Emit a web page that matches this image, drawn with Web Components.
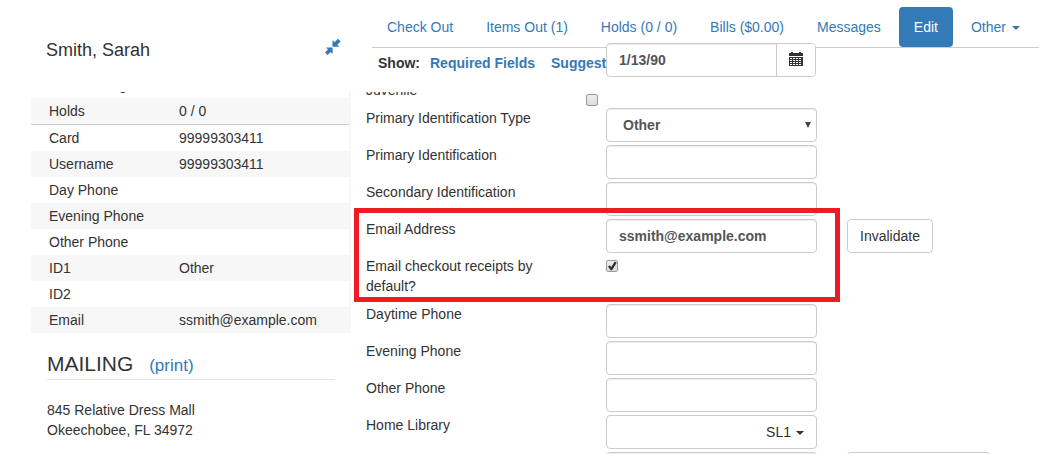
<!DOCTYPE html>
<html lang="en">
<head>
<meta charset="utf-8">
<title>Patron Editor</title>
<style>
    html, body {
        height: 100%;
    }

    body {
        margin: 0;
        overflow: hidden;
        background: #fff;
        color: #333;
        font: 14px/20px "Liberation Sans", Arial, sans-serif;
    }
</style>
</head>
<body>
<patron-page>
    <patron-summary slot="side" name="Smith, Sarah"></patron-summary>
    <nav-tabs slot="tabs">
        <nav-tab>Check Out</nav-tab>
        <nav-tab>Items Out (1)</nav-tab>
        <nav-tab>Holds (0 / 0)</nav-tab>
        <nav-tab>Bills ($0.00)</nav-tab>
        <nav-tab>Messages</nav-tab>
        <nav-tab active>Edit</nav-tab>
        <nav-tab dropdown>Other</nav-tab>
    </nav-tabs>
    <field-filter slot="filter"></field-filter>
    <date-field slot="date" value="1/13/90"></date-field>

    <form-row type="checkbox" label="Juvenile" outdent></form-row>
    <form-row type="select" label="Primary Identification Type" value="Other"></form-row>
    <form-row label="Primary Identification"></form-row>
    <form-row label="Secondary Identification"></form-row>
    <highlight-box>
        <form-row label="Email Address" value="ssmith@example.com">
            <action-button>Invalidate</action-button>
        </form-row>
        <form-row type="checkbox" label="Email checkout receipts by default?" checked></form-row>
    </highlight-box>
    <form-row label="Daytime Phone"></form-row>
    <form-row label="Evening Phone"></form-row>
    <form-row label="Other Phone"></form-row>
    <form-row type="dropdown" label="Home Library" value="SL1"></form-row>
    <form-row label="Main (Profile) Permission Group">
        <action-button>Secondary Groups</action-button>
    </form-row>
</patron-page>

<template id="patron-page">
    <style>
        :host {
            display: flex;
            height: 100%;
        }

        aside {
            flex: none;
            width: 351px;
        }

        main {
            flex: 1;
            min-width: 0;
            display: flex;
            flex-direction: column;
        }

        header {
            position: relative;
            flex: none;
            box-sizing: border-box;
            height: 92px;
            padding: 7px 0 0 21px;
        }

        slot[name="date"]::slotted(*) {
            position: absolute;
            top: 43px;
            left: 255px;
        }

        .fields {
            flex: 1;
            overflow: hidden;
        }

        /* form is scrolled partly under the header */
        form {
            margin-top: -12px;
        }
    </style>

    <aside><slot name="side"></slot></aside>
    <main>
        <header>
            <slot name="tabs"></slot>
            <slot name="filter"></slot>
            <slot name="date"></slot>
        </header>
        <div class="fields">
            <form><slot></slot></form>
        </div>
    </main>
</template>

<template id="patron-summary">
    <style>
        :host {
            display: flex;
            flex-direction: column;
            height: 100%;
        }

        header {
            flex: none;
            box-sizing: border-box;
            height: 92px;
            padding: 38px 10px 0 46px;
            display: flex;
            justify-content: space-between;
            align-items: flex-start;
        }

        h4 {
            margin: 0;
            font-size: 18px;
            line-height: 24px;
            font-weight: normal;
        }

        a {
            color: #337ab7;
            text-decoration: none;
        }

        svg {
            display: block;
        }

        .scroll {
            flex: 1;
            overflow: hidden;
            padding-left: 31px;
        }

        table {
            width: 100%;
            margin-top: -20px;
            border-collapse: collapse;
            border-right: 2px solid #f7f7f7;
        }

        th, td {
            padding: 3px 0;
            height: 20px;
            text-align: left;
            font-weight: normal;
        }

        th {
            width: 130px;
            padding-left: 18px;
        }

        tr:nth-child(even) {
            background: #f7f7f7;
        }

        tr.divider {
            border-bottom: 1px solid #ccc;
        }

        section {
            padding: 16px 16px 0;
        }

        h3 {
            margin: 0 0 20px;
            border-bottom: 1px solid #e5e5e5;
            font-size: 21px;
            line-height: 30px;
            font-weight: normal;
        }

        h3 a {
            margin-left: 10px;
            font-size: 17px;
            line-height: 20px;
        }

        address {
            font-style: normal;
        }
    </style>

    <header>
        <h4></h4>
        <a href="#" aria-label="Collapse summary">
            <svg width="16" height="18" viewBox="0 0 16 18" fill="#337ab7">
                <path d="M7.5 2.2 9.6 4.2 13 .8 15.7 3.4 12.3 6.8 14.3 8.8H7.5zM7.6 9.4V16L5.6 14 2.6 17 0 14.5 3 11.4 1 9.4z"/>
            </svg>
        </a>
    </header>
    <div class="scroll">
        <table></table>
        <section>
            <h3>MAILING <a href="#">(print)</a></h3>
            <address>845 Relative Dress Mall<br>Okeechobee, FL 34972</address>
        </section>
    </div>
</template>

<template id="nav-tabs">
    <style>
        :host {
            display: flex;
            gap: 3px;
            border-bottom: 1px solid #ccc;
        }
    </style>
    <slot></slot>
</template>

<template id="nav-tab">
    <style>
        :host {
            display: block;
            white-space: nowrap;
        }

        a {
            display: block;
            padding: 10px 15px;
            border-radius: 4px;
            color: #337ab7;
            text-decoration: none;
        }

        :host([active]) a {
            background: #337ab7;
            color: #fff;
        }

        :host([dropdown]) a::after {
            content: "";
            display: inline-block;
            margin-left: 6px;
            vertical-align: middle;
            border: 4px solid transparent;
            border-top-color: currentColor;
            border-bottom: 0;
        }
    </style>
    <a href="#"><slot></slot></a>
</template>

<template id="field-filter">
    <style>
        :host {
            display: flex;
            gap: 16px;
            padding: 5px 6px;
            font-weight: bold;
            white-space: nowrap;
        }

        span {
            margin-right: -6px;
        }

        a {
            color: #337ab7;
            text-decoration: none;
        }
    </style>
    <span>Show:</span>
    <a href="#">Required Fields</a>
    <a href="#">Suggested Fields</a>
</template>

<template id="date-field">
    <style>
        :host {
            display: flex;
            box-sizing: border-box;
            width: 210px;
            height: 34px;
            border: 1px solid #ccc;
            border-radius: 4px;
            background: #fff;
            overflow: hidden;
        }

        input {
            flex: 1;
            min-width: 0;
            padding: 0 12px;
            border: 0;
            background: none;
            box-shadow: inset 0 1px 1px rgba(0, 0, 0, .075);
            color: #555;
            font: inherit;
            font-weight: bold;
        }

        button {
            flex: none;
            width: 39px;
            padding: 0;
            border: 0;
            border-left: 1px solid #ccc;
            background: #fff;
        }

        svg {
            display: block;
            margin: -2px auto 0;
        }
    </style>
    <input type="text" aria-label="Date of Birth">
    <button type="button" aria-label="Pick a date">
        <svg width="14" height="14" viewBox="0 0 14 14">
            <path fill="#333" d="M0 1h2V0h2v1h6V0h2v1h2v3H0zM0 5h14v9H0z"/>
            <path stroke="#fff" d="M1 6.5h12M1 8.5h12M1 10.5h12M1 12.5h12" stroke-dasharray="2 1"/>
        </svg>
    </button>
</template>

<template id="form-row">
    <style>
        :host {
            display: grid;
            grid-template-columns: 240px minmax(0, 241px) 1fr;
            align-items: start;
            padding-bottom: 3px;
        }

        label, .control, .extra {
            padding: 0 15px;
        }

        label {
            margin-bottom: 5px;
        }

        .control {
            position: relative;
        }

        .extra {
            display: flex;
        }

        .field {
            display: block;
            box-sizing: border-box;
            width: 100%;
            height: 34px;
            padding: 6px 12px;
            border: 1px solid #ccc;
            border-radius: 4px;
            background: #fff;
            box-shadow: inset 0 1px 1px rgba(0, 0, 0, .075);
            color: #555;
            font: inherit;
            font-weight: bold;
        }

        select.field {
            appearance: none;
            padding: 0 16px;
        }

        .arrow {
            position: absolute;
            top: 14px;
            right: 21px;
            border: 3px solid transparent;
            border-top: 6px solid #444;
            border-bottom: 0;
            pointer-events: none;
        }

        button.field {
            box-shadow: none;
            color: #333;
            font-weight: normal;
            text-align: right;
        }

        button.field::after {
            content: "";
            display: inline-block;
            margin-left: 5px;
            vertical-align: middle;
            border: 4px solid transparent;
            border-top-color: #333;
            border-bottom: 0;
        }

        input[type="checkbox"] {
            appearance: none;
            display: block;
            box-sizing: border-box;
            width: 12px;
            height: 12px;
            margin: 4px 0;
            border: 1px solid #999;
            border-radius: 2px;
            background: linear-gradient(#eee, #ddd);
        }

        input[type="checkbox"]:checked::before {
            content: "";
            display: block;
            height: 10px;
            background: #333;
            clip-path: polygon(10% 55%, 28% 42%, 42% 60%, 78% 5%, 98% 18%, 50% 92%, 36% 92%);
        }

        :host([outdent]) input[type="checkbox"] {
            margin: 14px 0 -1px -20px;
        }
    </style>
    <label for="field"></label>
    <div class="control"></div>
    <div class="extra"><slot></slot></div>
</template>

<template id="action-button">
    <style>
        :host {
            display: block;
        }

        button {
            height: 34px;
            padding: 6px 12px;
            border: 1px solid #ccc;
            border-radius: 4px;
            background: #fff;
            color: #333;
            font: inherit;
            white-space: nowrap;
        }
    </style>
    <button type="button"><slot></slot></button>
</template>

<template id="highlight-box">
    <style>
        :host {
            display: block;
            position: relative;
        }

        .frame {
            position: absolute;
            top: -11px;
            bottom: 2px;
            left: 3px;
            box-sizing: border-box;
            width: 486px;
            border: 5px solid #ed1c24;
            pointer-events: none;
        }
    </style>
    <slot></slot>
    <div class="frame"></div>
</template>

<script>
// Clones the template that carries the element's own tag name
class TemplateElement extends HTMLElement {
    constructor() {
        super();
        const template = document.getElementById(this.localName);
        this.attachShadow({mode: 'open'});
        this.shadowRoot.appendChild(template.content.cloneNode(true));
    }
}

class PatronSummary extends TemplateElement {
    connectedCallback() {
        const rows = [
            ['Non Cataloged', ''],
            ['Holds', '0 / 0'],
            ['Card', '99999303411'],
            ['Username', '99999303411'],
            ['Day Phone', ''],
            ['Evening Phone', ''],
            ['Other Phone', ''],
            ['ID1', 'Other'],
            ['ID2', ''],
            ['Email', 'ssmith@example.com']
        ];
        const table = this.shadowRoot.querySelector('table');

        this.shadowRoot.querySelector('h4').textContent = this.getAttribute('name');

        rows.forEach(([name, value]) => {
            const tr = table.insertRow();
            const th = document.createElement('th');
            th.scope = 'row';
            th.textContent = name;
            tr.appendChild(th);
            tr.insertCell().textContent = value;
            tr.classList.toggle('divider', name === 'Holds');
        });
    }
}

class DateField extends TemplateElement {
    connectedCallback() {
        this.shadowRoot.querySelector('input').value = this.getAttribute('value');
    }
}

class FormRow extends TemplateElement {
    connectedCallback() {
        const control = this.shadowRoot.querySelector('.control');
        this.shadowRoot.querySelector('label').textContent = this.getAttribute('label');
        control.appendChild(this.createField());

        if (this.getAttribute('type') === 'select') {
            const arrow = document.createElement('span');
            arrow.className = 'arrow';
            control.appendChild(arrow);
        }
    }

    createField() {
        const value = this.getAttribute('value') || '';
        let field;

        switch (this.getAttribute('type')) {
            case 'checkbox':
                field = document.createElement('input');
                field.type = 'checkbox';
                field.checked = this.hasAttribute('checked');
                break;
            case 'select':
                field = document.createElement('select');
                field.className = 'field';
                field.add(new Option(value));
                break;
            case 'dropdown':
                field = document.createElement('button');
                field.type = 'button';
                field.className = 'field';
                field.textContent = value;
                break;
            default:
                field = document.createElement('input');
                field.type = 'text';
                field.className = 'field';
                field.value = value;
        }

        field.id = 'field';
        return field;
    }
}

customElements.define('patron-page', class extends TemplateElement {});
customElements.define('patron-summary', PatronSummary);
customElements.define('nav-tabs', class extends TemplateElement {});
customElements.define('nav-tab', class extends TemplateElement {});
customElements.define('field-filter', class extends TemplateElement {});
customElements.define('date-field', DateField);
customElements.define('form-row', FormRow);
customElements.define('action-button', class extends TemplateElement {});
customElements.define('highlight-box', class extends TemplateElement {});
</script>
</body>
</html>
